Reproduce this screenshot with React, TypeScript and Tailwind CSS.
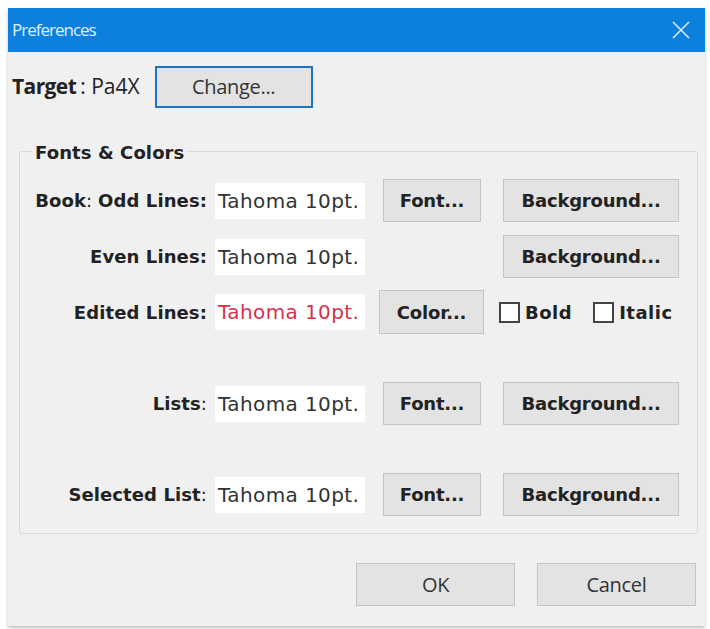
import React from "react";

const ui = { fontFamily: '"Open Sans", "Liberation Sans", sans-serif' };
const tahoma = { fontFamily: '"DejaVu Sans", Verdana, sans-serif' };

type BtnProps = { label: string; w: string; className?: string };

const WinButton = ({ label, w, className = "" }: BtnProps) => (
  <button
    type="button"
    style={tahoma}
    className={`${w} h-[43px] shrink-0 border border-[#c4c4c4] bg-[#e3e3e3] text-[18px] font-bold tracking-[-0.2px] text-[#222] ${className}`}
  >
    {label}
  </button>
);

const Value = ({ red = false }: { red?: boolean }) => (
  <div
    style={tahoma}
    className={`flex h-[36px] w-[150px] shrink-0 items-center bg-white pl-[3px] text-[20px] tracking-[0.4px] ${
      red ? "text-[#d8304a]" : "text-[#333]"
    }`}
  >
    Tahoma 10pt.
  </div>
);

const Label = ({ children }: { children: React.ReactNode }) => (
  <div
    style={tahoma}
    className="w-[195px] shrink-0 pr-[8px] text-right text-[18px] font-bold tracking-[0.1px] text-[#222]"
  >
    {children}
  </div>
);

const Checkbox = ({ label }: { label: string }) => (
  <div className="flex items-center gap-[5px]">
    <div className="h-[21px] w-[21px] border-2 border-[#444] bg-white" />
    <span style={tahoma} className="text-[18px] font-bold tracking-[0.5px] text-[#222]">
      {label}
    </span>
  </div>
);

export default function App() {
  return (
    <div className="h-[629px] w-[710px] bg-white pl-[8px] pt-[8px]">
      <div className="flex h-[618px] w-[697px] flex-col bg-[#f0f0f0] shadow-[0_2px_3px_rgba(0,0,0,0.25)]">
        {/* title bar */}
        <div className="flex h-[44px] items-center justify-between bg-[#0d80dd] pl-[4px] pr-[14px]">
          <span style={ui} className="text-[17px] tracking-[-1px] text-[#dff0ff]">
            Preferences
          </span>
          <svg width="18" height="18" viewBox="0 0 18 18" className="mr-[1px]">
            <path d="M1 1 L17 17 M17 1 L1 17" stroke="#d6ecff" strokeWidth="1.6" />
          </svg>
        </div>

        {/* target row */}
        <div className="flex items-center pl-[4px] pt-[14px]">
          <span style={ui} className="text-[21px] text-[#222]">
            <b className="font-bold tracking-[-0.6px]">Target</b>
            <span className="ml-[4px]">: Pa4X</span>
          </span>
          <button
            type="button"
            style={ui}
            className="ml-[15px] h-[42px] w-[158px] border-2 border-[#1976c8] bg-[#e3e3e3] text-[20px] tracking-[-0.3px] text-[#333]"
          >
            Change...
          </button>
        </div>

        {/* group box */}
        <div className="relative ml-[11px] mt-[43px] h-[383px] w-[679px] rounded-[2px] border border-[#d9d9d9]">
          <span
            style={tahoma}
            className="absolute left-[12px] top-[-13px] bg-[#f0f0f0] px-[3px] text-[18px] font-bold tracking-[0.1px] text-[#222]"
          >
            Fonts &amp; Colors
          </span>

          <div className="flex flex-col pt-[27px]">
            <div className="flex items-center">
              <Label>
                Book<span className="font-normal">: </span>Odd Lines:
              </Label>
              <Value />
              <WinButton label="Font..." w="w-[98px]" className="ml-[18px]" />
              <WinButton label="Background..." w="w-[176px]" className="ml-[22px]" />
            </div>

            <div className="mt-[13px] flex items-center">
              <Label>Even Lines:</Label>
              <Value />
              <WinButton label="Background..." w="w-[176px]" className="ml-[138px]" />
            </div>

            <div className="mt-[12px] flex items-center">
              <Label>Edited Lines:</Label>
              <Value red />
              <WinButton label="Color..." w="w-[105px]" className="ml-[14px] h-[44px]" />
              <div className="ml-[15px] flex items-center gap-[21px]">
                <Checkbox label="Bold" />
                <Checkbox label="Italic" />
              </div>
            </div>

            <div className="mt-[48px] flex items-center">
              <Label>
                Lists<span className="font-normal">:</span>
              </Label>
              <Value />
              <WinButton label="Font..." w="w-[98px]" className="ml-[18px]" />
              <WinButton label="Background..." w="w-[176px]" className="ml-[22px]" />
            </div>

            <div className="mt-[48px] flex items-center">
              <Label>
                Selected List<span className="font-normal">:</span>
              </Label>
              <Value />
              <WinButton label="Font..." w="w-[98px]" className="ml-[18px]" />
              <WinButton label="Background..." w="w-[176px]" className="ml-[22px]" />
            </div>
          </div>
        </div>

        {/* footer */}
        <div className="mt-[29px] flex justify-end gap-[22px] pr-[9px]">
          <button
            type="button"
            style={ui}
            className="h-[43px] w-[159px] border border-[#c4c4c4] bg-[#e3e3e3] text-[20px] tracking-[-0.3px] text-[#333]"
          >
            OK
          </button>
          <button
            type="button"
            style={ui}
            className="h-[43px] w-[159px] border border-[#c4c4c4] bg-[#e3e3e3] text-[20px] tracking-[-0.3px] text-[#333]"
          >
            Cancel
          </button>
        </div>
      </div>
    </div>
  );
}
